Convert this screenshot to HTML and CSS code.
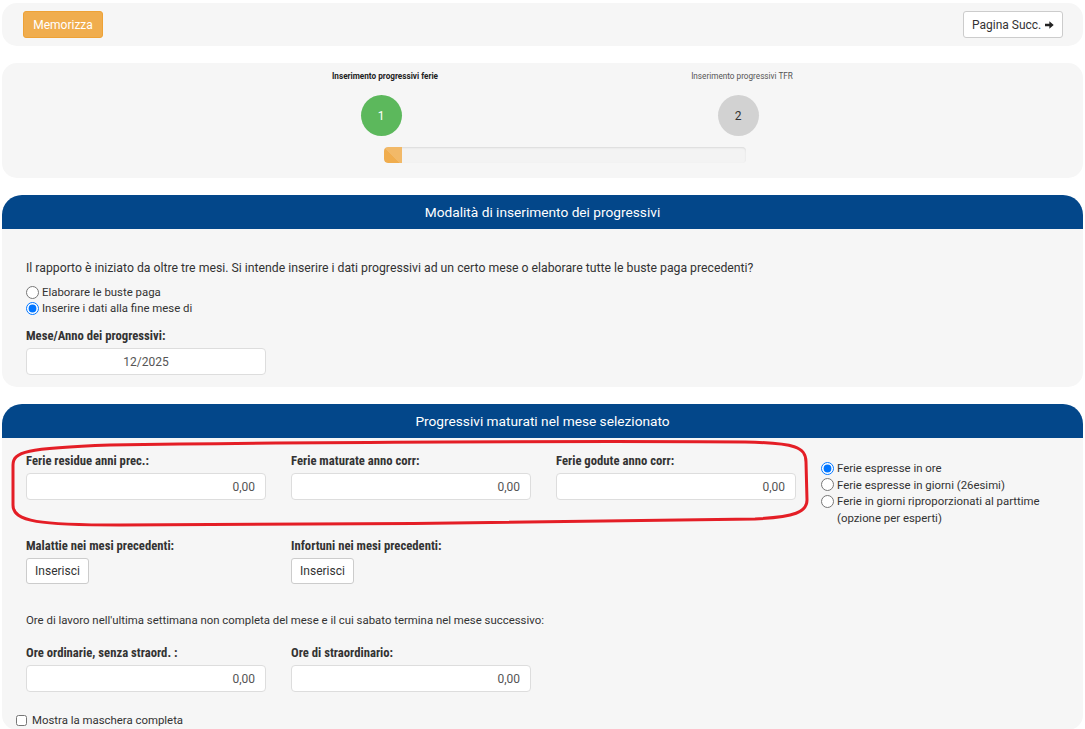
FILE: index.html
```html
<!DOCTYPE html>
<html lang="it">
<head>
    <meta charset="utf-8">
    <title>Inserimento progressivi</title>
    <link rel="stylesheet" href="styles.css">
</head>
<body>
    <div class="page">
        <!-- Toolbar -->
        <div class="toolbar">
            <button class="btn btn-warning">Memorizza</button>
            <button class="btn btn-default btn-next">
                Pagina Succ.
                <svg class="icon-arrow" viewBox="0 0 12 10" width="12" height="10"><path d="M0 3.3H6V0L12 5L6 10V6.7H0Z" fill="#222"/></svg>
            </button>
        </div>

        <!-- Wizard steps -->
        <div class="stepper">
            <div class="steps">
                <div class="step active">
                    <div class="step-label">Inserimento progressivi ferie</div>
                    <div class="step-circle">1</div>
                </div>
                <div class="step">
                    <div class="step-label">Inserimento progressivi TFR</div>
                    <div class="step-circle">2</div>
                </div>
            </div>
            <div class="progress">
                <div class="progress-bar" style="width: 5%"></div>
            </div>
        </div>

        <!-- Section 1 -->
        <section class="panel">
            <div class="panel-heading">Modalità di inserimento dei progressivi</div>
            <div class="panel-body body-first">
                <div class="form-block">
                    <p class="intro">Il rapporto è iniziato da oltre tre mesi. Si intende inserire i dati progressivi ad un certo mese o elaborare tutte le buste paga precedenti?</p>
                    <div class="radio-list">
                        <label class="radio"><input type="radio" name="modo"> Elaborare le buste paga</label>
                        <label class="radio"><input type="radio" name="modo" checked> Inserire i dati alla fine mese di</label>
                    </div>
                    <div class="field field-month">
                        <label class="field-label">Mese/Anno dei progressivi:</label>
                        <input type="text" class="form-control text-center" value="12/2025">
                    </div>
                </div>
            </div>
        </section>

        <!-- Section 2 -->
        <section class="panel">
            <div class="panel-heading">Progressivi maturati nel mese selezionato</div>
            <div class="panel-body body-second">
                <svg class="highlight" viewBox="0 0 830 100" width="830" height="100">
                    <path d="M11 67L11 27C11 14 23 10 108 7C298 4 598 3 743 4C793 5 804 9 804 24L805 62C805 74 793 79 753 81C598 84 298 87 118 87C38 87 11 84 11 67Z" fill="none" stroke="#e41e26" stroke-width="3"/>
                </svg>
                <div class="form-block">
                    <div class="form-row">
                        <div class="field">
                            <label class="field-label">Ferie residue anni prec.:</label>
                            <input type="text" class="form-control" value="0,00">
                        </div>
                        <div class="field">
                            <label class="field-label">Ferie maturate anno corr:</label>
                            <input type="text" class="form-control" value="0,00">
                        </div>
                        <div class="field">
                            <label class="field-label">Ferie godute anno corr:</label>
                            <input type="text" class="form-control" value="0,00">
                        </div>
                        <div class="radio-list unit-options">
                            <label class="radio"><input type="radio" name="unita" checked> Ferie espresse in ore</label>
                            <label class="radio"><input type="radio" name="unita"> Ferie espresse in giorni (26esimi)</label>
                            <label class="radio"><input type="radio" name="unita"> Ferie in giorni riproporzionati al parttime<br>(opzione per esperti)</label>
                        </div>
                    </div>

                    <div class="form-row row-events">
                        <div class="field">
                            <label class="field-label">Malattie nei mesi precedenti:</label>
                            <button class="btn btn-default btn-small">Inserisci</button>
                        </div>
                        <div class="field">
                            <label class="field-label">Infortuni nei mesi precedenti:</label>
                            <button class="btn btn-default btn-small">Inserisci</button>
                        </div>
                    </div>

                    <p class="note">Ore di lavoro nell'ultima settimana non completa del mese e il cui sabato termina nel mese successivo:</p>

                    <div class="form-row">
                        <div class="field">
                            <label class="field-label">Ore ordinarie, senza straord. :</label>
                            <input type="text" class="form-control" value="0,00">
                        </div>
                        <div class="field">
                            <label class="field-label">Ore di straordinario:</label>
                            <input type="text" class="form-control" value="0,00">
                        </div>
                    </div>
                </div>
                <label class="checkbox"><input type="checkbox"> Mostra la maschera completa</label>
            </div>
        </section>
    </div>
</body>
</html>
```

FILE: styles.css
```css
:root {
    --panel-bg: #f6f6f6;
    --heading-bg: #03478a;
    --orange: #f0ad4e;
    --green: #5cb85c;
    --text-color: #333;
}

* {
    box-sizing: border-box;
    margin: 0;
    padding: 0;
}

body {
    background: #fff;
    color: var(--text-color);
    font-family: Roboto, 'Liberation Sans', sans-serif;
    font-size: 11.4px;
    line-height: 16px;
}

.page {
    padding: 3px 2px 0;
}

/* Buttons */
.btn {
    display: inline-flex;
    align-items: center;
    justify-content: center;
    gap: 5px;
    height: 27px;
    padding: 0 8px;
    border-radius: 3px;
    font-family: inherit;
    font-size: 12px;
    white-space: nowrap;
    cursor: pointer;
}

.btn-warning {
    background: var(--orange);
    border: 1px solid #eea236;
    color: #fff;
    width: 80px;
}

.btn-default {
    background: #fff;
    border: 1px solid #ccc;
    color: var(--text-color);
}

.btn-next {
    width: 100px;
    gap: 4px;
}

.btn-small {
    height: 26px;
    width: 63px;
}

/* Toolbar */
.toolbar {
    display: flex;
    justify-content: space-between;
    align-items: center;
    background: var(--panel-bg);
    border-radius: 15px;
    padding: 8px 20px 8px 21px;
}

/* Stepper */
.stepper {
    margin-top: 17px;
    background: var(--panel-bg);
    border-radius: 15px;
    padding: 8px 0 15px;
}

.steps {
    display: grid;
    grid-template-columns: 200px 200px;
    column-gap: 157px;
    margin-left: 283px;
}

.step {
    display: flex;
    flex-direction: column;
    align-items: center;
}

.step-label {
    font-size: 8.2px;
    line-height: 10px;
    color: #555;
    white-space: nowrap;
}

.step.active .step-label {
    font-weight: bold;
    color: #222;
}

.step-circle {
    margin-top: 14px;
    width: 41px;
    height: 41px;
    border-radius: 50%;
    background: #d2d2d2;
    color: #333;
    font-size: 12px;
    display: flex;
    align-items: center;
    justify-content: center;
    margin-right: 8px;
}

.step.active .step-circle {
    background: var(--green);
    color: #fff;
}

.progress {
    margin: 11px 0 0 382px;
    width: 362px;
    height: 16px;
    background: #f3f3f3;
    border-radius: 4px;
    box-shadow: inset 0 1px 2px rgba(0, 0, 0, 0.1);
    overflow: hidden;
}

.progress-bar {
    height: 100%;
    background-color: var(--orange);
    background-image: linear-gradient(45deg, rgba(255, 255, 255, 0.15) 25%, transparent 25%, transparent 50%, rgba(255, 255, 255, 0.15) 50%, rgba(255, 255, 255, 0.15) 75%, transparent 75%, transparent);
    background-size: 40px 40px;
    border-radius: 4px 0 0 4px;
}

/* Panels */
.panel {
    margin-top: 17px;
}

.panel-heading {
    height: 34px;
    background: var(--heading-bg);
    color: #fff;
    border-radius: 20px 20px 0 0;
    font-size: 13.7px;
    display: flex;
    align-items: center;
    justify-content: center;
}

.panel-body {
    position: relative;
    background: var(--panel-bg);
    border-radius: 0 0 15px 15px;
    padding: 0 12px;
}

.form-block {
    padding: 0 12px;
}

.body-first {
    padding-top: 31px;
    padding-bottom: 12px;
}

.body-second {
    padding-top: 15px;
    padding-bottom: 2px;
}

.highlight {
    position: absolute;
    left: 0;
    top: 0;
    pointer-events: none;
}

.intro {
    font-size: 12.25px;
    margin-bottom: 8px;
}

.radio-list {
    display: flex;
    flex-direction: column;
}

.radio,
.checkbox {
    display: flex;
    align-items: flex-start;
    gap: 3px;
}

.radio input,
.checkbox input {
    width: 13px;
    height: 13px;
    margin: 1.5px 0 0;
    flex: none;
}

.checkbox input {
    width: 11px;
    height: 11px;
    margin: 2.5px 2px 0 0;
}

.field-month {
    margin-top: 12px;
}

.field {
    display: flex;
    flex-direction: column;
    align-items: flex-start;
}

.field-label {
    font-family: 'Roboto Condensed', 'Liberation Sans Narrow', Roboto, sans-serif;
    font-stretch: condensed;
    font-weight: bold;
    font-size: 12.7px;
    margin-bottom: 4px;
}

.form-control {
    width: 240px;
    height: 27px;
    padding: 0 10px;
    border: 1px solid #ddd;
    border-radius: 4px;
    background: #fff;
    font-family: inherit;
    font-size: 12px;
    color: #555;
    text-align: right;
}

.form-control.text-center {
    text-align: center;
}

.form-row {
    display: grid;
    grid-template-columns: 240px 240px 240px auto;
    column-gap: 25px;
}

.unit-options {
    padding-top: 7px;
}

.unit-options .radio {
    line-height: 16.5px;
}

.row-events {
    margin-top: 12px;
}

.note {
    margin: 28px 0 17px;
}

.checkbox {
    margin: 20px 0 0 2px;
}
```
